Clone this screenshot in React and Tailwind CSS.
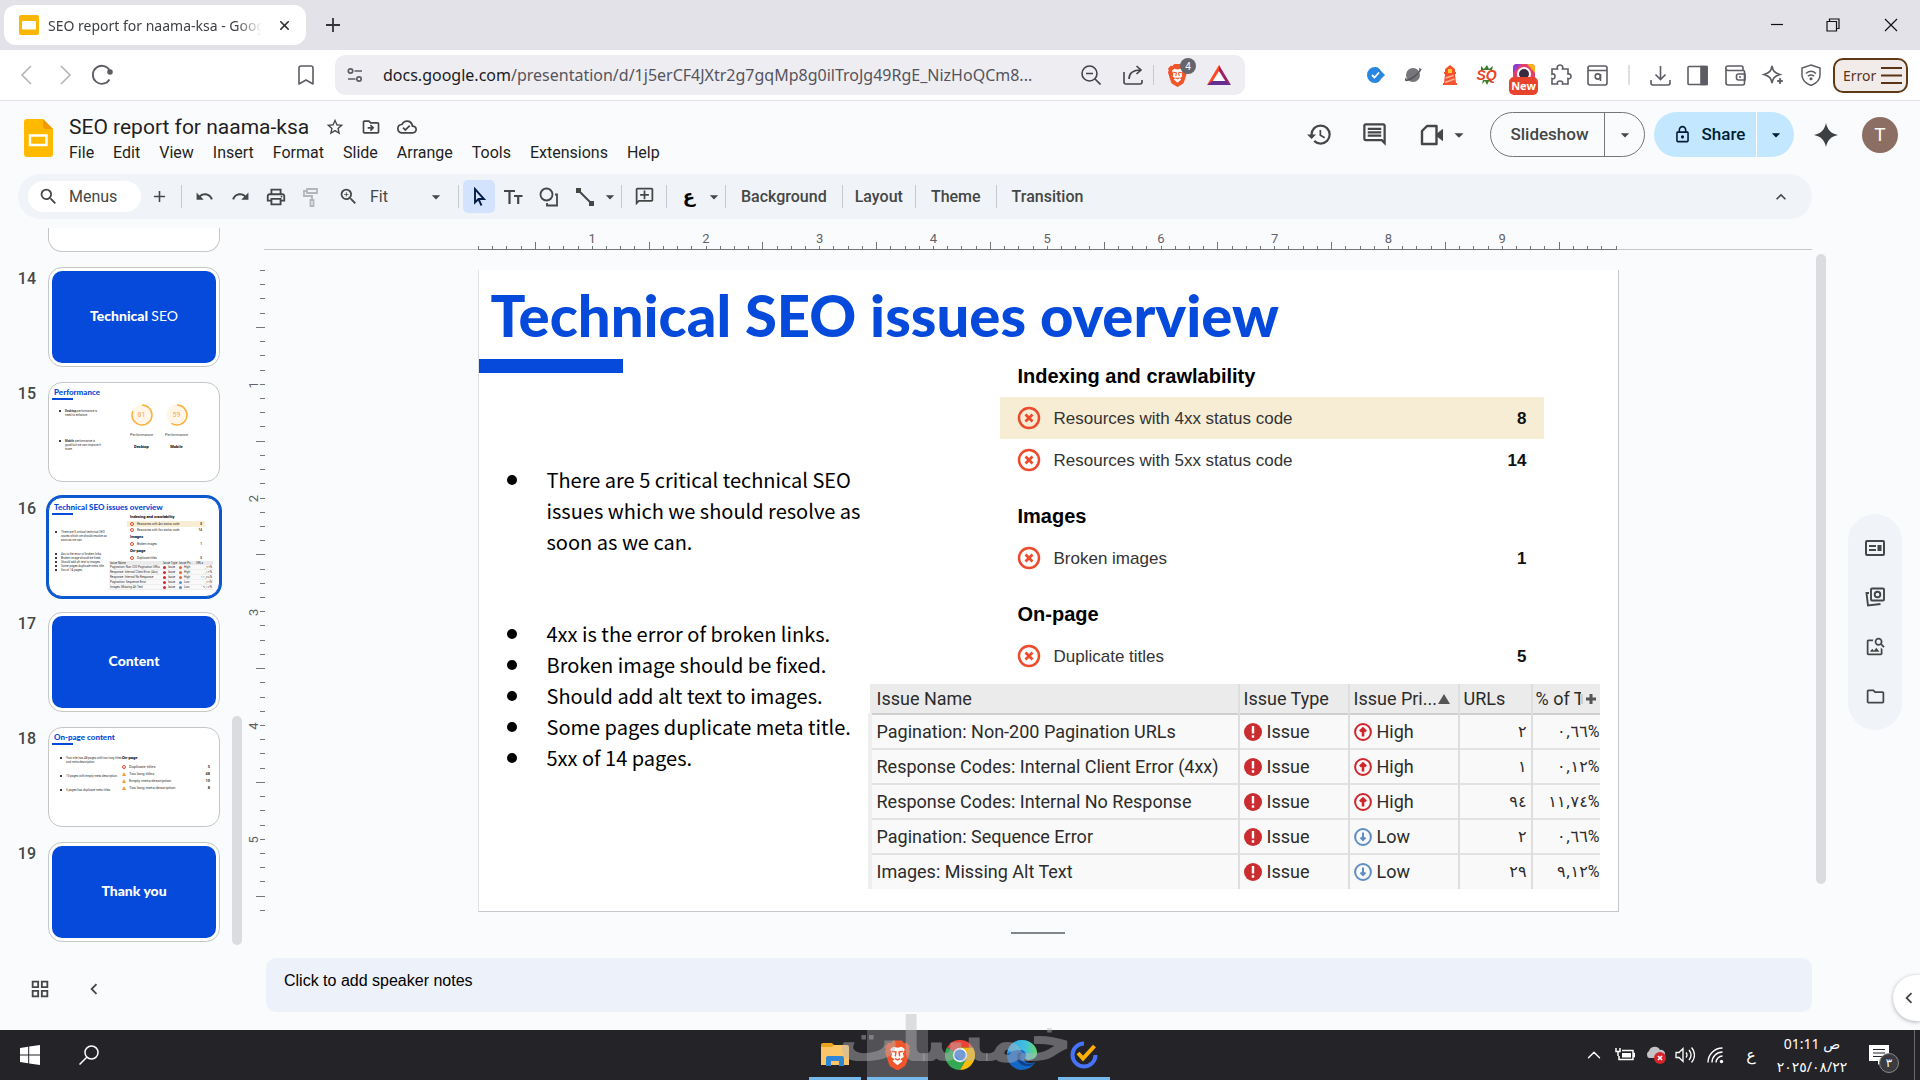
import React, { useState } from 'react';
import {
  MdAdd,
  MdArrowDropDown,
  MdChevronLeft,
  MdHistory,
  MdKeyboardArrowUp,
  MdOutlineAddComment,
  MdOutlineCloudDone,
  MdOutlineDriveFileMove,
  MdOutlineFolder,
  MdOutlineGridView,
  MdOutlineImageSearch,
  MdOutlineLock,
  MdOutlineInsertComment,
  MdOutlinePrint,
  MdRedo,
  MdSearch,
  MdStarBorder,
  MdUndo,
  MdZoomIn,
} from 'react-icons/md';
import { Bookmark, ChevronUp, X } from 'lucide-react';

const menus = ['File', 'Edit', 'View', 'Insert', 'Format', 'Slide', 'Arrange', 'Tools', 'Extensions', 'Help'];

const issueGroups = [
  {
    title: 'Indexing and crawlability',
    rows: [
      { label: 'Resources with 4xx status code', count: 8, active: true },
      { label: 'Resources with 5xx status code', count: 14 },
    ],
  },
  { title: 'Images', rows: [{ label: 'Broken images', count: 1 }] },
  { title: 'On-page', rows: [{ label: 'Duplicate titles', count: 5 }] },
];

const crawlIssues = [
  { name: 'Pagination: Non-200 Pagination URLs', priority: 'High', urls: '٢', percent: '٠,٦٦%' },
  { name: 'Response Codes: Internal Client Error (4xx)', priority: 'High', urls: '١', percent: '٠,١٢%' },
  { name: 'Response Codes: Internal No Response', priority: 'High', urls: '٩٤', percent: '١١,٧٤%' },
  { name: 'Pagination: Sequence Error', priority: 'Low', urls: '٢', percent: '٠,٦٦%' },
  { name: 'Images: Missing Alt Text', priority: 'Low', urls: '٢٩', percent: '٩,١٢%' },
];

const notes = [
  '4xx is the error of broken links.',
  'Broken image should be fixed.',
  'Should add alt text to images.',
  'Some pages duplicate meta title.',
  '5xx of 14 pages.',
];

/* ---------- Icons ---------- */

function BraveIcon({ className }) {
  return (
    <svg viewBox="0 0 24 28" className={className} aria-hidden="true">
      <path d="M8 0h8l2.500 2.600 2.300-.4L24 6l-.8 2.400.8 2.400-3.600 11.600c-.5 1.600-1.400 2.400-2.600 3.200L12 29l-5.800-3.400C5 24.800 4.100 24 3.600 22.400L0 10.800l.8-2.400L0 6l3.200-3.800 2.300.4z" fill="#f1562b" />
      <path d="M5 8.500l3-2.500 4 1 4-1 3 2.500-1.800 4 .8 3.500-3.200 2 2 1.800-4.800 4-4.800-4 2-1.800-3.200-2 .8-3.500z" fill="#fff" />
      <path d="M6.500 10.500l4 .6-.6 4.200M17.500 10.500l-4 .6.6 4.200M9.500 17.500l2.500 1.200 2.500-1.200" fill="none" stroke="#f1562b" strokeWidth="1.400" />
    </svg>
  );
}

function SlidesFile({ className }) {
  return (
    <svg viewBox="0 0 29 38" className={className} aria-hidden="true">
      <path d="M3 0h16l10 10v25a3 3 0 0 1-3 3H3a3 3 0 0 1-3-3V3a3 3 0 0 1 3-3z" fill="#ffba00" />
      <path d="M19 0l10 10H22a3 3 0 0 1-3-3z" fill="#f29900" />
      <path d="M6 16.500h16.500v9.500H6z" fill="none" stroke="#fff" strokeWidth="2.400" />
    </svg>
  );
}

function SlidesTab({ className }) {
  return (
    <svg viewBox="0 0 20 20" className={className} aria-hidden="true">
      <rect width="20" height="20" rx="2" fill="#fbb604" />
      <rect x="3" y="6" width="14" height="8.500" rx="1" fill="#fff" />
    </svg>
  );
}

function LineIcon({ children, size = 'size-5', box = 20, width = 1.6 }) {
  return (
    <svg
      viewBox={`0 0 ${box} ${box}`}
      className={`${size} shrink-0`}
      fill="none"
      stroke="currentColor"
      strokeWidth={width}
      aria-hidden="true"
    >
      {children}
    </svg>
  );
}

function ErrorBadge() {
  return (
    <svg viewBox="0 0 24 24" className="size-6 shrink-0" fill="none" stroke="#ec4b2c" aria-hidden="true">
      <circle cx="12" cy="12" r="10" strokeWidth="2.500" />
      <path d="M8.500 8.500l7 7m0-7l-7 7" strokeWidth="2.800" />
    </svg>
  );
}

function IssueDot() {
  return (
    <svg viewBox="0 0 18 18" className="size-[18px] shrink-0" aria-hidden="true">
      <circle cx="9" cy="9" r="9" fill="#cb2c30" />
      <path d="M9 3v7.500M9 12.300v2.400" stroke="#fff" strokeWidth="2.400" />
    </svg>
  );
}

function PriorityDot({ level }) {
  const color = level === 'High' ? '#d0262b' : '#5f8ec4';
  return (
    <svg viewBox="0 0 18 18" className="size-[18px] shrink-0" fill="none" stroke={color} aria-hidden="true">
      <circle cx="9" cy="9" r="7.900" strokeWidth="2" />
      {level === 'High' ? (
        <path d="M9 13.500V6M6 8.500l3-3 3 3" strokeWidth="2.600" />
      ) : (
        <path d="M9 4.500V12M6.500 9.500L9 12l2.500-2.500" strokeWidth="2" />
      )}
    </svg>
  );
}

/* ---------- Browser chrome ---------- */

function TabStrip() {
  return (
    <div className="flex h-[50px] items-center bg-[#e3e2e8] pl-1">
      <div className="flex h-10 w-[302px] items-center rounded-xl bg-white pl-[15px] pr-3">
        <SlidesTab className="size-5 shrink-0" />
        <span className="ml-[9px] w-[218px] overflow-hidden whitespace-nowrap font-['Noto_Sans','Open_Sans',sans-serif] text-[14px] text-[#3f4045] [mask-image:linear-gradient(to_right,black_88%,transparent)]">
          SEO report for naama-ksa - Google Slides
        </span>
        <button aria-label="Close tab" className="ml-3 flex size-5 items-center justify-center text-[#2b2b30]">
          <X size={15} strokeWidth={2.5} />
        </button>
      </div>
      <button aria-label="New tab" className="ml-[15px] flex size-6 items-center justify-center text-[#33333a]">
        <LineIcon size="size-[14px]" box={14} width={1.8}>
          <path d="M7 0v14M0 7h14" />
        </LineIcon>
      </button>
      <div className="ml-auto flex text-[#111]">
        <button aria-label="Minimize" className="flex w-[57px] justify-center">
          <LineIcon size="size-[14px]" box={14} width={1.2}><path d="M1 6.500h12" /></LineIcon>
        </button>
        <button aria-label="Restore" className="flex w-[56px] justify-center">
          <LineIcon size="size-[14px]" box={14} width={1.2}>
            <path d="M1 3.500h9.500V13H1zM3.500 3.500V1H13v9.500h-2.500" />
          </LineIcon>
        </button>
        <button aria-label="Close" className="flex w-[59px] justify-center">
          <LineIcon size="size-[14px]" box={14} width={1.2}><path d="M1 1l12 12M13 1L1 13" /></LineIcon>
        </button>
      </div>
    </div>
  );
}

function ExtensionIcons() {
  const cell = 'flex w-[37px] justify-center';
  return (
    <div className="flex items-center text-[#5d5c64]">
      <button aria-label="Verified" className={cell}>
        <svg viewBox="0 0 18 16" className="h-4 w-[18px]">
          <path d="M8 0c3 0 4.500 1.500 6 4l4 4-4 4c-1.500 2.500-3 4-6 4a8 8 0 0 1 0-16z" fill="#2a87e0" />
          <path d="M5 8l2.500 2.500 4.500-5" fill="none" stroke="#fff" strokeWidth="1.800" />
        </svg>
      </button>
      <button aria-label="Planet" className={cell}>
        <svg viewBox="0 0 18 18" className="size-[18px]">
          <circle cx="9" cy="9" r="7" fill="#77777b" />
          <path d="M1 14c3 1 14-6 16-11M2 12c-2 4 3 3 8-1s8-9 5-8" fill="none" stroke="#55555a" strokeWidth="1.200" />
        </svg>
      </button>
      <button aria-label="Lighthouse" className={cell}>
        <svg viewBox="0 0 16 20" className="h-5 w-4">
          <path d="M8 0l5 4v3h1v2h-1l1 9h1v2H1v-2h1l1-9H2V7h1V4z" fill="#f4532e" />
          <path d="M6 4h4v4H6z" fill="#ffc933" />
          <path d="M3.500 13l8-2.500M3 17.500l9.500-3.500" stroke="#ffb199" strokeWidth="1.400" />
        </svg>
      </button>
      <button aria-label="SEOquake" className={cell}>
        <span className="relative flex size-5 items-center justify-center font-['Liberation_Sans',sans-serif] text-[14px] font-bold italic leading-none text-[#e8441f]">
          <svg viewBox="0 0 20 20" className="absolute inset-0 size-5">
            <path d="M4 1l3 3 3-4 2 4 4-3-1 4H4zM5 19l3-3 2 4 2-4 3 2-2-3H6z" fill="#3c7c2c" />
          </svg>
          <span className="relative">SQ</span>
        </span>
      </button>
      <button aria-label="Shortcut" className={`${cell} relative h-8`}>
        <svg viewBox="0 0 22 22" className="mt-[5px] size-[22px]">
          <rect width="22" height="20" rx="4" fill="#e63e6d" />
          <path d="M14 0h4a4 4 0 0 1 4 4v5z" fill="#f6b21b" />
          <path d="M0 9V4a4 4 0 0 1 4-4h4z" fill="#8b3fd1" />
          <circle cx="11" cy="10" r="6" fill="#3a2a3f" stroke="#fff" strokeWidth="2" />
        </svg>
        <span className="absolute inset-x-1 bottom-[-4px] h-[18px] rounded-[5px] bg-[#e8432c] text-center font-['Noto_Sans',sans-serif] text-[11px] font-bold leading-[18px] text-white">
          New
        </span>
      </button>
      <button aria-label="Extensions" className={cell}>
        <LineIcon size="size-[22px]" box={22}>
          <path d="M2 5h5.500c-1-2 .2-4 2.500-4s3.500 2 2.500 4H18v5c2-.6 3 .8 3 2.300s-1 2.900-3 2.200V20h-5.500c.8-2-.5-3-2.500-3s-3.300 1-2.500 3H2v-5.500c2 .8 3-.5 3-2.300S4 9.500 2 10.300z" />
        </LineIcon>
      </button>
      <button aria-label="Search tabs" className={cell}>
        <LineIcon size="size-[21px]" box={21}>
          <rect x="1" y="1" width="19" height="19" rx="2" />
          <path d="M1 5.500h19M13.500 9v7" />
          <circle cx="10.800" cy="11.500" r="2.600" />
        </LineIcon>
      </button>
      <span className="mx-[12px] h-5 w-[2px] bg-[#e0dfe5]" />
      <button aria-label="Downloads" className={cell}>
        <LineIcon size="size-[21px]" box={21}>
          <path d="M10.500 1v13M5.500 9.500l5 5 5-5M1 15v3a2 2 0 0 0 2 2h15a2 2 0 0 0 2-2v-3" />
        </LineIcon>
      </button>
      <button aria-label="Sidebar" className={cell}>
        <LineIcon size="size-[21px]" box={21}>
          <rect x="1" y="1.500" width="19" height="18" rx="1" />
          <path d="M14 1.500h6v18h-6z" fill="currentColor" />
        </LineIcon>
      </button>
      <button aria-label="Wallet" className="flex w-[38px] justify-center">
        <LineIcon size="size-[21px]" box={21}>
          <path d="M18 5.500V2.500A1.500 1.500 0 0 0 16.500 1H3a2 2 0 0 0 0 4.500h15.500a1 1 0 0 1 1 1V18a2 2 0 0 1-2 2H3a2 2 0 0 1-2-2V3.500" />
          <path d="M20 9h-6.500a2 2 0 0 0-2 2v2a2 2 0 0 0 2 2H20zM14 12h2" />
        </LineIcon>
      </button>
      <button aria-label="Leo" className="flex w-[38px] justify-center">
        <LineIcon size="size-[22px]" box={22}>
          <path d="M10 2c1 5 2 6.500 8 8.500-6 2-7 3.500-8 8.500-1-5-2-6.500-8-8.500 6-2 7-3.500 8-8.500z" />
          <path d="M18 14c.4 2 1 2.600 3 3-2 .6-2.600 1-3 3-.4-2-1-2.400-3-3 2-.4 2.600-1 3-3z" fill="currentColor" strokeWidth="1" />
        </LineIcon>
      </button>
      <button aria-label="VPN" className={cell}>
        <LineIcon size="size-[22px]" box={22} width={1.5}>
          <path d="M11 1l9 3v7c0 5-4 8.500-9 10.500C6 19.500 2 16 2 11V4z" />
          <path d="M6 9.500c3-2.600 7-2.600 10 0M8 12.200c2-1.600 4-1.600 6 0" />
          <circle cx="11" cy="14.800" r=".8" fill="currentColor" />
        </LineIcon>
      </button>
    </div>
  );
}

function AddressBar() {
  return (
    <div className="flex h-[51px] items-center border-b border-[#e1e0e6] bg-white pl-2.5 pr-3 text-[#5d5c64]">
      <button aria-label="Back" className="flex w-[34px] justify-center text-[#b5b4ba]">
        <LineIcon size="size-5"><path d="M14 1L5 10l9 9" /></LineIcon>
      </button>
      <button aria-label="Forward" className="ml-1 flex w-[34px] justify-center text-[#b5b4ba]">
        <LineIcon size="size-5"><path d="M6 1l9 9-9 9" /></LineIcon>
      </button>
      <button aria-label="Reload" className="ml-[3px] flex w-[34px] justify-center">
        <LineIcon size="size-[22px]" box={22} width={1.8}>
          <path d="M18.500 15.500A9 9 0 1 1 19 7" />
          <circle cx="19" cy="8" r="1.900" fill="currentColor" />
        </LineIcon>
      </button>
      <button aria-label="Bookmark this tab" className="ml-[169px] flex w-9 justify-center">
        <Bookmark size={24} strokeWidth={1.6} />
      </button>
      <div className="ml-[11px] flex h-10 w-[910px] items-center rounded-[10px] bg-[#eeedf2] pl-3 pr-[14px]">
        <LineIcon size="size-4" box={16} width={1.7}>
          <circle cx="3.500" cy="4" r="2.200" />
          <path d="M7.500 4H15M1 12h7.500" />
          <circle cx="12" cy="12" r="2.200" />
        </LineIcon>
        <div className="ml-5 flex-1 whitespace-nowrap font-['Noto_Sans','Open_Sans',sans-serif] text-[16px] text-[#55545c]">
          <a href="#url" className="text-[#1b1b1f]">
            docs.google.com
            <span className="text-[#55545c]">/presentation/d/1j5erCF4JXtr2g7gqMp8g0ilTroJg49RgE_NizHoQCm8...</span>
          </a>
        </div>
        <button aria-label="Zoom out" className="flex w-8 justify-center text-[#44434a]">
          <LineIcon><circle cx="8.500" cy="8.500" r="7.500" /><path d="M14 14l5.500 5.500M5 8.500h7" /></LineIcon>
        </button>
        <button aria-label="Share" className="ml-2.5 flex w-8 justify-center text-[#44434a]">
          <LineIcon>
            <path d="M1 7v10a2 2 0 0 0 2 2h14a2 2 0 0 0 2-2v-2M6 14c0-6 4-9 12-9M13.500 1L18 5l-4.500 4" />
          </LineIcon>
        </button>
        <span className="ml-1 h-5 w-px bg-[#c9c8ce]" />
        <button aria-label="Brave Shields" className="relative ml-[14px]">
          <BraveIcon className="h-[26px] w-[19px]" />
          <span className="absolute -top-1 left-3 flex size-4 items-center justify-center rounded-full bg-[#66656c] text-[10px] text-white">
            4
          </span>
        </button>
        <button aria-label="Rewards" className="ml-5">
          <svg viewBox="0 0 24 20" className="h-5 w-6">
            <path d="M12 0L0 20l5-3 7-11z" fill="#ff4724" />
            <path d="M12 0l12 20-5-3-7-11z" fill="#9e1f63" />
            <path d="M0 20h24l-5-4H5z" fill="#662d91" />
            <path d="M12 7.500L17 16H7z" fill="#fff" />
          </svg>
        </button>
      </div>
      <div className="ml-auto flex items-center">
        <ExtensionIcons />
        <button className="ml-1 flex h-[35px] w-[75px] items-center justify-between rounded-[10px] border-2 border-[#5e3a17] bg-[#f1ecea] pl-2 pr-1 font-['Noto_Sans',sans-serif] text-[14px] text-[#5a3414]">
          Error
          <LineIcon size="size-[21px]" box={21} width={2}><path d="M0 3h21M0 10.500h21M0 18h21" /></LineIcon>
        </button>
      </div>
    </div>
  );
}

/* ---------- Docs header ---------- */

function DocsHeader() {
  return (
    <header className="flex h-[73px] items-start pl-6 pr-[22px] text-[#444746]">
      <SlidesFile className="mt-[18px] h-[38px] w-[29px]" />
      <div className="ml-4 pt-[11px]">
        <div className="flex h-[30px] items-center">
          <h1 className="text-[21px] leading-[30px] text-[#1f1f1f]">SEO report for naama-ksa</h1>
          <div className="ml-4 flex gap-4">
            <button aria-label="Star"><MdStarBorder size={20} /></button>
            <button aria-label="Move"><MdOutlineDriveFileMove size={20} /></button>
            <button aria-label="Saved to Drive"><MdOutlineCloudDone size={20} /></button>
          </div>
        </div>
        <nav className="flex gap-[19px] text-[16px] leading-[22px] text-[#1f1f1f]">
          {menus.map((item) => (
            <button key={item}>{item}</button>
          ))}
        </nav>
      </div>
      <div className="ml-auto flex items-center pt-[11px]">
        <button aria-label="Version history" className="flex w-[55px] justify-center"><MdHistory size={27} /></button>
        <button aria-label="Comments" className="flex w-[55px] justify-center"><MdOutlineInsertComment size={27} /></button>
        <button aria-label="Call" className="ml-[18px] flex items-center">
          <LineIcon size="size-6" box={24} width={2.4}>
            <path d="M7 3h9.500v18H2V8z" strokeLinejoin="round" />
            <path d="M17 11l5.500-4.500v11L17 13z" fill="currentColor" strokeWidth="1" />
          </LineIcon>
          <MdArrowDropDown size={22} className="ml-1" />
        </button>
        <div className="ml-5 flex h-[45px] w-[155px] rounded-full border border-[#747775] text-[17px] font-medium">
          <button className="flex-1 pl-1">Slideshow</button>
          <button aria-label="Slideshow options" className="flex w-10 items-center justify-center border-l border-[#747775]">
            <MdArrowDropDown size={20} />
          </button>
        </div>
        <div className="ml-[9px] flex h-[45px] w-[140px] overflow-hidden rounded-full bg-[#c2e7ff] text-[17px] font-medium text-[#001d35]">
          <button className="flex flex-1 items-center justify-center gap-2.5 pl-2">
            <MdOutlineLock size={19} />
            Share
          </button>
          <button aria-label="Share options" className="flex w-[38px] items-center justify-center border-l border-white">
            <MdArrowDropDown size={20} />
          </button>
        </div>
        <button aria-label="Ask Gemini" className="ml-5">
          <svg viewBox="0 0 24 24" className="size-6">
            <path d="M12 0c1.500 7 5 10.500 12 12-7 1.500-10.500 5-12 12-1.500-7-5-10.500-12-12 7-1.500 10.500-5 12-12z" fill="#3c4043" />
          </svg>
        </button>
        <button aria-label="Account" className="ml-6 size-9 rounded-full bg-[#8d6e63] text-[19px] leading-9 text-white">
          T
        </button>
      </div>
    </header>
  );
}

function ToolButton({ label, children }) {
  return (
    <button aria-label={label} className="flex h-8 w-9 items-center justify-center">
      {children}
    </button>
  );
}

function Divider() {
  return <span className="mx-1 h-[23px] w-px shrink-0 bg-[#c7c9cc]" />;
}

function Toolbar() {
  return (
    <div className="ml-[18px] mr-[108px] flex h-[45px] items-center rounded-full bg-[#f0f3f8] px-[10px] text-[#444746]">
      <button className="flex h-[31px] w-[113px] items-center rounded-full bg-white pl-[10px] text-[16px]">
        <MdSearch size={21} />
        <span className="ml-2.5">Menus</span>
      </button>
      <ToolButton label="New slide"><MdAdd size={19} /></ToolButton>
      <Divider />
      <ToolButton label="Undo"><MdUndo size={19} /></ToolButton>
      <ToolButton label="Redo"><MdRedo size={19} /></ToolButton>
      <ToolButton label="Print"><MdOutlinePrint size={22} /></ToolButton>
      <ToolButton label="Paint format">
        <span className="text-[#b4b6b8]">
          <LineIcon width={1.8}>
            <path d="M5 2h10v4H5zM5 4H2v5h8v4M8.500 13h3v6h-3z" />
          </LineIcon>
        </span>
      </ToolButton>
      <ToolButton label="Zoom"><MdZoomIn size={21} /></ToolButton>
      <div className="relative ml-1 w-[84px]">
        <select aria-label="Zoom level" className="w-full appearance-none bg-transparent text-[16px]" defaultValue="Fit">
          <option>Fit</option>
          <option>50%</option>
          <option>100%</option>
        </select>
        <MdArrowDropDown size={20} className="pointer-events-none absolute right-2 top-0.5" />
      </div>
      <Divider />
      <button aria-label="Select" className="flex h-[33px] w-8 items-center justify-center rounded-[5px] bg-[#d3e3fd] text-[#041e49]">
        <LineIcon size="size-5" width={1.9}><path d="M6 2v13.500l3.500-3.500h5.500zM9.500 12l3 6.500" /></LineIcon>
      </button>
      <ToolButton label="Text box">
        <LineIcon width={2.2}><path d="M1 4h11M6.500 4v13M11 9h8.500M15.200 9v8" /></LineIcon>
      </ToolButton>
      <ToolButton label="Shape">
        <LineIcon width={1.8}><circle cx="7.500" cy="7.500" r="6" /><path d="M16 7.500h2v11H8V16" /></LineIcon>
      </ToolButton>
      <ToolButton label="Line">
        <LineIcon width={2}><path d="M3 3l14 14" /><path d="M2 2h3v3H2zM15 15h3v3h-3z" fill="currentColor" /></LineIcon>
      </ToolButton>
      <button aria-label="Line options" className="flex w-[14px] justify-center"><MdArrowDropDown size={20} className="shrink-0" /></button>
      <Divider />
      <ToolButton label="Add comment"><MdOutlineAddComment size={21} className="-scale-x-100" /></ToolButton>
      <Divider />
      <button aria-label="Input tools" className="w-9 font-['DejaVu_Sans',sans-serif] text-[18px] font-bold leading-6 text-black">ع</button>
      <button aria-label="Input options" className="flex w-[14px] justify-center"><MdArrowDropDown size={20} className="shrink-0" /></button>
      <Divider />
      <div className="flex items-center text-[16px] font-medium">
        <button className="px-[11px]">Background</button>
        <Divider />
        <button className="px-2">Layout</button>
        <Divider />
        <button className="px-[11px]">Theme</button>
        <Divider />
        <button className="px-[11px]">Transition</button>
      </div>
      <button aria-label="Hide the menus" className="ml-auto mr-[11px]"><MdKeyboardArrowUp size={20} /></button>
    </div>
  );
}

/* ---------- Filmstrip ---------- */

function CoverThumb({ children }) {
  return (
    <div className="m-[3px] flex flex-1 items-center justify-center rounded-[10px] bg-[#054ada] pb-1 font-['Lato',sans-serif] text-[14px] font-black text-white">
      <span>{children}</span>
    </div>
  );
}

function ThumbTitle({ children }) {
  return (
    <>
      <div className="pl-[5px] pt-[4px] font-['Lato',sans-serif] text-[8px] font-black leading-[10px] text-[#054ada]">{children}</div>
      <div className="ml-[3px] mt-[1px] h-[2px] w-[21px] shrink-0 bg-[#054ada]" />
    </>
  );
}

function ThumbBullet({ children }) {
  return (
    <li className="flex gap-[4px]">
      <span className="mt-[1px] size-[2px] shrink-0 rounded-full bg-black" />
      <span>{children}</span>
    </li>
  );
}

function Gauge({ value, label, device }) {
  const length = 2 * Math.PI * 10;
  return (
    <div className="flex w-[35px] flex-col items-center text-[4px] leading-[5px] text-[#444]">
      <span className="grid place-items-center">
        <svg viewBox="0 0 24 24" className="col-start-1 row-start-1 size-6 -rotate-90" fill="#fff6e8" stroke="#fbb03b">
          <circle cx="12" cy="12" r="10.500" stroke="none" />
          <circle cx="12" cy="12" r="10" strokeWidth="1.500" strokeDasharray={`${(length * value) / 100} ${length}`} />
        </svg>
        <span className="z-10 col-start-1 row-start-1 text-[7px] leading-[7px] text-[#f3a950]">{value}</span>
      </span>
      <span className="mt-[5px]">{label}</span>
      <b className="mt-[7px] text-black">{device}</b>
    </div>
  );
}

function PerformanceThumb() {
  return (
    <>
      <ThumbTitle>Performance</ThumbTitle>
      <div className="flex pl-[10px] pt-[3px]">
        <ul className="w-[65px] pt-[6px] text-[3px] leading-[4px] text-[#333]">
          <ThumbBullet><b>Desktop</b> performance is<br />need to enhance.</ThumbBullet>
          <li className="h-[22px]" />
          <ThumbBullet><b>Mobile</b> performance is<br />good but we can improve it<br />more.</ThumbBullet>
        </ul>
        <Gauge value={81} label="Performance" device="Desktop" />
        <Gauge value={59} label="Performance" device="Mobile" />
      </div>
    </>
  );
}

function OverviewThumb() {
  return (
    <>
      <ThumbTitle>Technical SEO issues overview</ThumbTitle>
      <div className="flex pl-[6px] text-[3px] leading-[4px] text-[#333]">
        <ul className="w-[54px] pt-[15px]">
          <ThumbBullet>There are 5 critical technical SEO issues which we should resolve as soon as we can.</ThumbBullet>
          <li className="h-[10px]" />
          {notes.map((note) => (
            <ThumbBullet key={note}>{note}</ThumbBullet>
          ))}
        </ul>
        <div className="w-[104px]">
          <div className="ml-[18px] w-[78px]">
            {issueGroups.map((group, i) => (
              <div key={group.title} className={i === 0 ? '' : 'mt-[2px]'}>
                <b className="block h-[6px] pl-[3px] text-[4px] text-black">{group.title}</b>
                {group.rows.map((row) => (
                  <div key={row.label} className={`flex h-[6px] items-center gap-[3px] px-[3px] ${row.active ? 'bg-[#f7edd5]' : ''}`}>
                    <span className="size-[4px] rounded-full border border-[#ec4b2c]" />
                    {row.label}
                    <b className="ml-auto">{row.count}</b>
                  </div>
                ))}
              </div>
            ))}
          </div>
          <div className="flex bg-[#ebebeb] px-[1px]">
            <span className="w-[53px]">Issue Name</span>
            <span className="w-[16px]">Issue Type</span>
            <span className="w-[17px]">Issue Pri...</span>
            <span>URLs</span>
          </div>
          {crawlIssues.map((issue) => (
            <div key={issue.name} className="flex h-[5px] items-center whitespace-nowrap border-b border-[#eee] bg-[#f9f9f9] px-[1px]">
              <span className="w-[53px]">{issue.name.replace('Response Codes', 'Response')}</span>
              <span className="mr-[2px] size-[3px] rounded-full bg-[#cb2c30]" />
              <span className="w-[11px]">Issue</span>
              <span className={`mr-[2px] size-[3px] rounded-full ${issue.priority === 'High' ? 'bg-[#e06a3a]' : 'bg-[#5f8ec4]'}`} />
              <span>{issue.priority}</span>
              <span className="ml-auto">{issue.percent}</span>
            </div>
          ))}
        </div>
      </div>
    </>
  );
}

const contentRows = [
  ['Duplicate titles', 5],
  ['Too long titles', 48],
  ['Empty meta description', 10],
  ['Too long meta description', 8],
];

function OnPageThumb() {
  return (
    <>
      <ThumbTitle>On-page content</ThumbTitle>
      <div className="flex pl-[11px] pt-[11px] text-[3px] leading-[4px] text-[#333]">
        <ul className="w-[62px] space-y-[10px]">
          <ThumbBullet>Your site has 48 pages with too long titles and meta description.</ThumbBullet>
          <ThumbBullet>10 pages with empty meta description.</ThumbBullet>
          <ThumbBullet>5 pages has duplicate meta titles.</ThumbBullet>
        </ul>
        <div className="w-[88px] text-[4px]">
          <b className="block h-[7px] text-black">On-page</b>
          {contentRows.map(([label, count], i) => (
            <div key={label} className="flex h-[7px] items-center gap-[3px]">
              {i === 0 ? (
                <span className="size-[4px] rounded-full border border-[#ec4b2c]" />
              ) : (
                <svg viewBox="0 0 8 8" className="size-[4px]"><path d="M4 0l4 8H0z" fill="#f39c3d" /></svg>
              )}
              {label}
              <b className="ml-auto">{count}</b>
            </div>
          ))}
        </div>
      </div>
    </>
  );
}

const thumbs = [
  { number: 14, body: <CoverThumb>Technical <span className="font-normal">SEO</span></CoverThumb> },
  { number: 15, body: <PerformanceThumb /> },
  { number: 16, body: <OverviewThumb /> },
  { number: 17, body: <CoverThumb>Content</CoverThumb> },
  { number: 18, body: <OnPageThumb /> },
  { number: 19, body: <CoverThumb>Thank you</CoverThumb> },
];

function Filmstrip() {
  const [current, setCurrent] = useState(16);

  return (
    <aside className="flex w-[246px] shrink-0 flex-col pt-[9px]">
      <div className="flex">
        <div className="flex w-[232px] flex-col gap-[15px] pb-[3px]">
          <div className="ml-12 h-6 w-[172px] rounded-b-[14px] border border-t-0 border-[#c4c7c5] bg-white" />
          {thumbs.map(({ number, body }) => (
            <div key={number} className="flex h-[100px]">
              <span className="w-9 text-right text-[16px] font-medium leading-6 text-[#444746]">{number}</span>
              <button
                aria-label={`Slide ${number}`}
                onClick={() => setCurrent(number)}
                className={`ml-3 flex w-[172px] flex-col overflow-hidden rounded-[14px] bg-white text-left ${
                  number === current ? 'border border-[#0b57d0] ring-2 ring-[#0b57d0]' : 'border border-[#c4c7c5]'
                }`}
              >
                {body}
              </button>
            </div>
          ))}
        </div>
        <div className="h-[229px] w-2.5 self-end rounded-full bg-[#dadce0]" />
      </div>
      <div className="mt-auto flex h-[82px] items-center pl-[29px] text-[#444746]">
        <button aria-label="Grid view"><MdOutlineGridView size={22} /></button>
        <button aria-label="Hide filmstrip" className="ml-8"><MdChevronLeft size={22} /></button>
      </div>
    </aside>
  );
}

/* ---------- Rulers ---------- */

const INCH = 113.75;

function HorizontalRuler() {
  const ticks = Array.from({ length: 81 }, (_, i) => i);
  return (
    <svg viewBox="0 0 1140 30" className="h-[30px] w-[1140px]" aria-hidden="true">
      <path d="M1 29.500h1139" stroke="#747775" />
      {ticks.map((i) => (
        <path key={i} d={`M${Math.round((i * INCH) / 8) + 1.5} 30v${i % 8 === 4 ? -8 : -4}`} stroke="#747775" />
      ))}
      {[1, 2, 3, 4, 5, 6, 7, 8, 9].map((n) => (
        <text key={n} x={n * INCH + 1.5} y="23" textAnchor="middle" fontSize="13" fill="#5f6368">{n}</text>
      ))}
    </svg>
  );
}

function VerticalRuler() {
  const ticks = Array.from({ length: 46 }, (_, i) => i);
  return (
    <svg viewBox="0 0 20 642" className="mt-5 h-[642px] w-5 shrink-0" aria-hidden="true">
      {ticks.map((i) => (
        <path key={i} d={`M19 ${Math.round((i * INCH) / 8) + 0.5}h${i % 8 === 4 ? -9 : -5}`} stroke="#747775" />
      ))}
      {[1, 2, 3, 4, 5].map((n) => (
        <text key={n} transform={`translate(12 ${n * INCH + 1}) rotate(-90)`} textAnchor="middle" fontSize="13" fill="#5f6368">
          {n}
        </text>
      ))}
    </svg>
  );
}

/* ---------- Slide ---------- */

function IssueSummary() {
  return (
    <div className="ml-[132px] w-[544px] font-['Liberation_Sans',Arial,sans-serif]">
      {issueGroups.map((group, i) => (
        <section key={group.title} className={i === 0 ? '' : 'mt-[15px]'}>
          <h3 className="h-[41px] pl-[18px] text-[20px] font-bold leading-[41px] text-black">{group.title}</h3>
          {group.rows.map((row) => (
            <div
              key={row.label}
              className={`flex h-[42px] items-center px-[17px] text-[17px] text-[#333] ${row.active ? 'bg-[#f7edd5]' : ''}`}
            >
              <ErrorBadge />
              <span className="ml-[13px] pt-[2px]">{row.label}</span>
              <b className="ml-auto pt-[2px] text-[#111]">{row.count}</b>
            </div>
          ))}
        </section>
      ))}
    </div>
  );
}

function CrawlTable() {
  const line = 'border-l-2 border-[#dedede]';
  return (
    <table className="w-[730px] table-fixed border-collapse text-[18px] leading-none text-[#2b2b2b]">
      <colgroup>
        <col className="w-[369px]" />
        <col className="w-[110px]" />
        <col className="w-[110px]" />
        <col className="w-[73px]" />
        <col className="w-[68px]" />
      </colgroup>
      <thead>
        <tr className="h-[30px] border-b-2 border-[#cfcfcf] bg-[#ebebeb] text-left">
          <th className="pl-[7px] font-normal">Issue Name</th>
          <th className={`pl-1 font-normal ${line}`}>Issue Type</th>
          <th className={`pl-1 font-normal ${line}`}>
            <span className="flex items-center whitespace-nowrap">
              Issue Pri...
              <svg viewBox="0 0 12 10" className="ml-px h-2.5 w-3"><path d="M6 0l6 10H0z" fill="#555" /></svg>
            </span>
          </th>
          <th className={`pl-1 font-normal ${line}`}>URLs</th>
          <th className={`font-normal ${line}`}>
            <span className="flex items-center whitespace-nowrap pl-[3px]">
              <span className="w-[45px] overflow-hidden leading-5">% of T</span>
              <span className="flex flex-1 justify-center border-l-2 border-[#cfcfcf] text-[#555]">
                <LineIcon size="size-[10px]" box={10} width={3}><path d="M5 0v10M0 5h10" /></LineIcon>
              </span>
            </span>
          </th>
        </tr>
      </thead>
      <tbody>
        {crawlIssues.map((issue) => (
          <tr key={issue.name} className="h-[35px] border-b-2 border-[#e2e2e2] bg-[#f9f9f9] last:border-b-0">
            <td className="border-l-4 border-[#efefef] pl-[5px]">{issue.name}</td>
            <td className={line}>
              <span className="flex items-center gap-[5px] pl-1"><IssueDot />Issue</span>
            </td>
            <td className={line}>
              <span className="flex items-center gap-[5px] pl-1"><PriorityDot level={issue.priority} />{issue.priority}</span>
            </td>
            <td className={`pr-1 text-right font-['DejaVu_Sans',sans-serif] text-[16px] ${line}`}>{issue.urls}</td>
            <td className={`whitespace-nowrap text-right font-['DejaVu_Sans',sans-serif] text-[16px] ${line}`}>
              {issue.percent.slice(0, -1)}
              <span className="font-['Roboto',sans-serif]">%</span>
            </td>
          </tr>
        ))}
      </tbody>
    </table>
  );
}

function Bullet({ children }) {
  return (
    <li className="flex">
      <span className="mr-[30px] mt-[11px] size-2.5 shrink-0 rounded-full bg-black" />
      <span>{children}</span>
    </li>
  );
}

function Slide() {
  return (
    <article className="flex h-[642px] w-[1141px] shrink-0 flex-col border-b border-l border-r border-[#c4c7cc] border-l-[#dfe1e5] bg-white">
      <h2 className="mt-[5px] pb-[5px] pl-3 font-['Lato',sans-serif] text-[58px] font-black leading-[79px] text-[#054ada]">
        Technical SEO issues overview
      </h2>
      <div className="h-[14px] w-[144px] bg-[#054ada]" />
      <div className="-mt-[17px] flex">
        <ul className="w-[389px] shrink-0 pl-[28px] pt-[108px] font-['Noto_Sans_CJK_SC',sans-serif] text-[20px] leading-[31px] text-black">
          <Bullet>
            There are 5 critical technical SEO<br />issues which we should resolve as<br />soon as we can.
          </Bullet>
          <li className="h-[61px]" />
          {notes.map((note) => (
            <Bullet key={note}>{note}</Bullet>
          ))}
        </ul>
        <div>
          <IssueSummary />
          <div className="mt-[7px]">
            <CrawlTable />
          </div>
        </div>
      </div>
    </article>
  );
}

function Editor() {
  return (
    <main className="flex min-w-0 flex-1 flex-col">
      <div className="ml-[18px] mr-[18px] flex h-[31px] items-end justify-center border-b border-[#c4c7c5] pl-[18px]">
        <div className="-mb-px"><HorizontalRuler /></div>
      </div>
      <div className="flex">
        <VerticalRuler />
        <div className="flex flex-1 justify-center pl-[18px] pt-5">
          <Slide />
        </div>
        <div className="w-[18px] shrink-0 pl-1 pt-1">
          <div className="h-[630px] w-2.5 rounded-full bg-[#dadce0]" />
        </div>
      </div>
      <div className="flex h-[42px] items-center justify-center">
        <span className="h-[2px] w-[54px] bg-[#80868b]" />
      </div>
      <div className="mb-[18px] ml-5 mr-[18px] mt-auto flex h-[54px] rounded-[10px] bg-[#edf1fa]">
        <textarea
          aria-label="Speaker notes"
          defaultValue="Click to add speaker notes"
          className="w-full resize-none bg-transparent px-[18px] pt-[13px] font-['Liberation_Sans',Arial,sans-serif] text-[16px] leading-5 text-black outline-none"
        />
      </div>
    </main>
  );
}

function SideRail() {
  return (
    <aside className="relative flex w-[90px] shrink-0 flex-col items-end pr-[18px] pt-[295px] text-[#444746]">
      <div className="flex h-[216px] w-[54px] flex-col items-center justify-center gap-[29px] rounded-full bg-[#f0f3f8]">
        <button aria-label="Templates">
          <LineIcon width={2}>
            <rect x="1" y="3" width="18" height="14" rx="1" />
            <path d="M4 8h7M4 12h7M13.500 7v6M15.500 7v6" />
          </LineIcon>
        </button>
        <button aria-label="Building blocks">
          <LineIcon width={1.9}>
            <rect x="6" y="1.500" width="13" height="12" rx="1" />
            <circle cx="12.500" cy="7.500" r="2.800" />
            <path d="M4 6H1.500l1.500 12.500L15.500 17" />
          </LineIcon>
        </button>
        <button aria-label="Stock and web images"><MdOutlineImageSearch size={21} /></button>
        <button aria-label="Open folder"><MdOutlineFolder size={21} /></button>
      </div>
      <button
        aria-label="Show side panel"
        className="absolute bottom-[9px] right-0 flex h-[46px] w-[27px] items-center rounded-l-full bg-white pl-[5px] shadow-[0_1px_4px_rgba(60,64,67,0.4)]"
      >
        <MdChevronLeft size={22} />
      </button>
    </aside>
  );
}

/* ---------- Taskbar ---------- */

function ChromeLogo() {
  return (
    <svg viewBox="0 0 30 30" className="size-[30px]">
      <path d="M15 15L2 7.500A15 15 0 0 1 28 7.500H15z" fill="#ea4335" />
      <path d="M2 7.500A15 15 0 0 0 15 30l6.500-11.200L15 15z" fill="#34a853" />
      <path d="M28 7.500A15 15 0 0 1 15 30l6.500-11.200L15 7.500z" fill="#fbbc05" />
      <circle cx="15" cy="15" r="7.200" fill="#fff" />
      <circle cx="15" cy="15" r="5.600" fill="#3f86ea" />
    </svg>
  );
}

function EdgeLogo() {
  return (
    <svg viewBox="0 0 30 30" className="size-[30px]">
      <defs>
        <linearGradient id="edgeTop" x1="0" x2="1">
          <stop offset="0" stopColor="#2fa6ec" />
          <stop offset="0.600" stopColor="#41bfe0" />
          <stop offset="1" stopColor="#66d96b" />
        </linearGradient>
      </defs>
      <circle cx="15" cy="15" r="15" fill="#1567c4" />
      <path d="M0 14C1 5 7 0 15 0s15 6 15 12.500c0 5-4 7.500-8 7.500-3 0-4.500-1-4-2 2-3 1-7.500-4-8C8 9.500 2 12 0 14z" fill="url(#edgeTop)" />
      <path d="M11 13c-3 7 2 14 11 13 2 0 4-1.500 5-3-4 2-9 1-11-1-3-2.500-3.500-6-1-9-1.500-1-3-1-4 0z" fill="#0d3f8c" />
      <path d="M18 18c-.5 1 1 2 4 2 3 0 6-1.200 8-4v2l-1.500 4c-4 2-9 1.500-11.500-2z" fill="#232328" />
    </svg>
  );
}

function Taskbar() {
  return (
    <footer className="relative grid h-[50px] grid-cols-[1fr_auto_1fr] bg-[#242428] text-white">
      <div className="flex items-center pl-5">
        <button aria-label="Start">
          <svg viewBox="0 0 20 20" className="size-5" fill="#fff">
            <path d="M0 3l8.200-1.200v7.700H0zM9.200 1.600L20 0v9.500H9.200zM0 10.500h8.200v7.700L0 17zM9.200 10.500H20V20L9.200 18.400z" />
          </svg>
        </button>
        <button aria-label="Search" className="ml-[39px]">
          <LineIcon width={1.5}><circle cx="12.500" cy="7.500" r="6.500" /><path d="M8 12l-7.500 7.500" /></LineIcon>
        </button>
      </div>

      <div className="flex gap-[6px] pr-[2px]">
        <button aria-label="File Explorer" className="flex h-full w-[52px] items-center justify-center border-b-[3px] border-[#76b9ed] pt-[3px]">
          <svg viewBox="0 0 28 24" className="h-6 w-7">
            <path d="M0 2a2 2 0 0 1 2-2h9l2 2v5H0z" fill="#e9a31c" />
            <path d="M0 4h11l2-2h13a2 2 0 0 1 2 2v18H0z" fill="#fcc668" />
            <path d="M5 23V15a2 2 0 0 1 2-2h14a2 2 0 0 1 2 2v8h-5v-5h-8v5z" fill="#2f86d4" />
          </svg>
        </button>
        <button aria-label="Brave" className="flex h-full w-[61px] items-center justify-center border-b-[3px] border-[#76b9ed] bg-[#515156] pt-[3px]">
          <BraveIcon className="h-[30px] w-[25px]" />
        </button>
        <button aria-label="Chrome" className="flex h-full w-[52px] items-center justify-center"><ChromeLogo /></button>
        <button aria-label="Edge" className="ml-[4px] flex h-full w-[52px] items-center justify-center"><EdgeLogo /></button>
        <button aria-label="TickTick" className="ml-[4px] flex h-full w-[52px] items-center justify-center border-b-[3px] border-[#76b9ed] pt-[3px]">
          <svg viewBox="0 0 28 28" className="size-7" fill="none">
            <path d="M14 2.500a11.500 11.500 0 1 0 11.500 11.500" stroke="#4772fa" strokeWidth="4" />
            <path d="M8 12l5 5.500L24.500 5" stroke="#ffb000" strokeWidth="4" />
          </svg>
        </button>
      </div>

      <div className="flex items-center justify-end">
        <button aria-label="Show hidden icons" className="mr-[10px]"><ChevronUp size={22} strokeWidth={1.5} /></button>
        <LineIcon size="size-5" width={1.5}>
          <path d="M7 5.500h11v9H4V11M18 8.500h1.500v3H18M1 3v3.500h4V3M3 7v4" />
          <path d="M7 8h9v4.500H7z" fill="currentColor" stroke="none" />
        </LineIcon>
        <svg viewBox="0 0 21 18" className="ml-[10px] h-[18px] w-[21px]">
          <path d="M4 12a4 4 0 0 1 0-7 6 6 0 0 1 11-1 4 4 0 0 1 2 8z" fill="#c4c4c8" />
          <circle cx="15" cy="12" r="6" fill="#d5242c" />
          <path d="M13 10l4 4m0-4l-4 4" stroke="#fff" strokeWidth="1.600" />
        </svg>
        <span className="ml-[9px]">
          <LineIcon width={1.3}>
            <path d="M1 7.500h3l4-4v13l-4-4H1zM11 7.500c1.200 1.500 1.200 3.500 0 5M14 5c2.500 3 2.500 7 0 10M16.500 2.500c4 4.500 4 10.500 0 15" />
          </LineIcon>
        </span>
        <span className="ml-3">
          <LineIcon size="size-[17px]" box={17} width={1.4}>
            <path d="M1 15.500C1 7.500 7.500 1 15.500 1M5 15.500C5 9.700 9.700 5 15.500 5M9 15.500C9 12 12 9 15.500 9" />
            <circle cx="14.500" cy="14.500" r="1.700" fill="currentColor" stroke="none" />
          </LineIcon>
        </span>
        <span className="ml-5 w-[14px] text-center font-['DejaVu_Sans',sans-serif] text-[16px]">ع</span>
        <div dir="ltr" className="ml-[18px] w-[72px] whitespace-nowrap text-center font-['Noto_Sans','DejaVu_Sans',sans-serif] text-[14px] leading-[23px]">
          <div>01:11 ص</div>
          <div>٢٠٢٥/٠٨/٢٢</div>
        </div>
        <button aria-label="Notifications" className="relative ml-[21px] mr-[25px]">
          <svg viewBox="0 0 20 20" className="size-5">
            <path d="M0 0h20v16h-7l-4 4v-4H0z" fill="#fff" />
            <path d="M4 4.500h12M4 8h12M4 11.500h12" stroke="#242428" />
          </svg>
          <span className="absolute left-2.5 top-2 flex size-5 items-center justify-center rounded-full border border-[#8a8a8e] bg-[#3a3a3f] font-['DejaVu_Sans',sans-serif] text-[12px]">
            ٣
          </span>
        </button>
        <span className="mr-[5px] h-full w-px bg-[#6b6a6e]" />
      </div>

      <div
        dir="rtl"
        className="pointer-events-none absolute bottom-0 left-[845px] w-[228px] whitespace-nowrap text-center font-['DejaVu_Sans',sans-serif] text-[62px] font-bold leading-[80px] text-[#b9b9bb]/45"
      >
        خمسات
      </div>
    </footer>
  );
}

function App() {
  return (
    <div className="flex min-h-screen flex-col overflow-hidden bg-[#fafbfd] font-['Roboto',sans-serif]">
      <TabStrip />
      <AddressBar />
      <DocsHeader />
      <Toolbar />
      <div className="flex flex-1">
        <Filmstrip />
        <Editor />
        <SideRail />
      </div>
      <Taskbar />
    </div>
  );
}

export default App;
